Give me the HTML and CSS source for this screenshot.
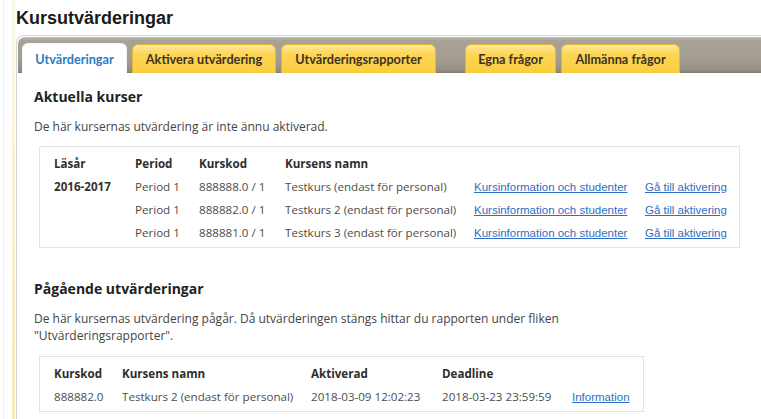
FILE: index.html
```html
<!DOCTYPE html>
<html lang="sv">
<head>
<meta charset="utf-8">
<title>Kursutvärderingar</title>
<link rel="stylesheet" href="styles.css">
</head>
<body>
<div class="frame">
  <div class="inner">
    <h1 class="title">Kursutvärderingar</h1>
    <div class="panel">
      <div class="tabbar">
        <div class="tab active">Utvärderingar</div>
        <div class="tab t-akt">Aktivera utvärdering</div>
        <div class="tab t-rap">Utvärderingsrapporter</div>
        <div class="tab t-egna">Egna frågor</div>
        <div class="tab t-allm">Allmänna frågor</div>
      </div>
      <div class="content">
        <h2 class="heading">Aktuella kurser</h2>
        <p class="text">De här kursernas utvärdering är inte ännu aktiverad.</p>
        <div class="box box-current">
          <div class="row head">
            <span>Läsår</span><span>Period</span><span>Kurskod</span><span>Kursens namn</span><span></span><span></span>
          </div>
          <div class="row">
            <span class="year">2016-2017</span><span>Period 1</span><span>888888.0 / 1</span><span>Testkurs (endast för personal)</span><a href="#" class="link">Kursinformation och studenter</a><a href="#" class="link">Gå till aktivering</a>
          </div>
          <div class="row">
            <span></span><span>Period 1</span><span>888882.0 / 1</span><span>Testkurs 2 (endast för personal)</span><a href="#" class="link">Kursinformation och studenter</a><a href="#" class="link">Gå till aktivering</a>
          </div>
          <div class="row">
            <span></span><span>Period 1</span><span>888881.0 / 1</span><span>Testkurs 3 (endast för personal)</span><a href="#" class="link">Kursinformation och studenter</a><a href="#" class="link">Gå till aktivering</a>
          </div>
        </div>

        <h2 class="heading heading-second">Pågående utvärderingar</h2>
        <p class="text text-wrap">De här kursernas utvärdering pågår. Då utvärderingen stängs hittar du rapporten under fliken<br>"Utvärderingsrapporter".</p>
        <div class="box box-ongoing">
          <div class="row head">
            <span>Kurskod</span><span>Kursens namn</span><span>Aktiverad</span><span>Deadline</span><span></span>
          </div>
          <div class="row">
            <span>888882.0</span><span>Testkurs 2 (endast för personal)</span><span>2018-03-09 12:02:23</span><span>2018-03-23 23:59:59</span><a href="#" class="link">Information</a>
          </div>
        </div>
      </div>
    </div>
  </div>
</div>
</body>
</html>
```

FILE: styles.css
```css
html, body {
  margin: 0;
  padding: 0;
  background: #ffffff;
}

body {
  font-family: "Open Sans", "Noto Sans", sans-serif;
  color: #4a4a4a;
  overflow: hidden;
}

.frame {
  margin-left: 3px;
  border-left: 1px solid #ededed;
  padding-left: 8px;
  min-height: 419px;
}

.inner {
  border-left: 3px solid #f5ecc0;
  border-image: linear-gradient(to bottom, #fbf8ea, #f4e9b6) 1;
  padding-left: 1px;
  min-height: 419px;
}

.title {
  margin: 0;
  padding-top: 8px;
  font-family: "Liberation Sans", Arial, sans-serif;
  font-size: 18px;
  line-height: 20px;
  font-weight: bold;
  color: #1a1a1a;
}

.panel {
  margin-top: 7px;
  border: 1px solid #d6d6d6;
  border-right: none;
  border-radius: 8px 0 0 0;
  padding: 1px 0 0 1px;
  min-height: 400px;
}

.tabbar {
  height: 36px;
  display: flex;
  align-items: flex-end;
  gap: 5px;
  padding-left: 4px;
  border-radius: 7px 0 0 0;
  background: linear-gradient(to bottom, #c4c0b7 0, #a9a397 3px, #a49e92 60%, #948e83 92%, #7f7a70 100%);
}

.tab {
  height: 29px;
  line-height: 29px;
  box-sizing: border-box;
  text-align: center;
  font-family: "Lato", "Open Sans", sans-serif;
  font-weight: bold;
  font-size: 12.7px;
  color: #3b3222;
  border: 1px solid #e2b63a;
  border-bottom: none;
  border-radius: 6px 6px 0 0;
  background: linear-gradient(to bottom, #fde79a 0, #fdd554 35%, #fbcd3f 100%);
}

.tab.active {
  width: 105px;
  height: 30px;
  line-height: 30px;
  background: #ffffff;
  border-color: #f4f4f4;
  color: #2b7bc2;
}

.t-akt { width: 144px; }
.t-rap { width: 155px; margin-right: 24px; }
.t-egna { width: 91px; }
.t-allm { width: 119px; }

.content {
  padding: 14px 0 0 16px;
}

.heading {
  margin: 0;
  font-size: 14px;
  line-height: 20px;
  font-weight: bold;
  color: #222222;
}

.heading-second {
  margin-top: 31px;
}

.text {
  margin: 11px 0 0 0;
  font-size: 12px;
  line-height: 17px;
  color: #444444;
}

.box {
  margin: 11px 0 0 5px;
  border: 1px solid #e3e3e3;
  padding: 5px 0 3px 14px;
  box-sizing: border-box;
}

.box-current { width: 701px; }
.box-ongoing { width: 605px; margin-top: 12px; }

.row {
  display: grid;
  height: 23px;
  align-items: center;
  font-size: 11.6px;
  color: #4d4d4d;
  white-space: nowrap;
}

.box-current .row {
  grid-template-columns: 81px 64px 86px 189px 171px auto;
}

.box-ongoing .row {
  grid-template-columns: 68px 189px 131px 130px auto;
}

.row.head {
  font-weight: bold;
  color: #2e2e2e;
}

.year {
  font-weight: bold;
  color: #333333;
}

.link {
  font-family: "Liberation Sans", Arial, sans-serif;
  font-size: 11.5px;
  color: #2d6fc4;
  text-decoration: underline;
}
```
